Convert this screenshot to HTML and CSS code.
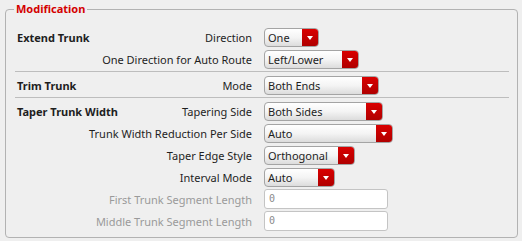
FILE: index.html
```html
<!DOCTYPE html>
<html lang="en">

<head>
    <meta charset="UTF-8">
    <title>Modification</title>
    <link rel="stylesheet" href="styles.css">
</head>

<body>
    <fieldset class="group">
        <legend class="group-title">Modification</legend>

        <!-- Extend Trunk -->
        <div class="row">
            <div class="names"><b class="section">Extend Trunk</b><span class="label">Direction</span></div>
            <div class="combo w54"><span class="value">One</span><span class="drop"></span></div>
        </div>
        <div class="row">
            <div class="names"><span class="label">One Direction for Auto Route</span></div>
            <div class="combo w94"><span class="value">Left/Lower</span><span class="drop"></span></div>
        </div>
        <div class="sep"></div>

        <!-- Trim Trunk -->
        <div class="row">
            <div class="names"><b class="section">Trim Trunk</b><span class="label">Mode</span></div>
            <div class="combo w114"><span class="value">Both Ends</span><span class="drop"></span></div>
        </div>
        <div class="sep"></div>

        <!-- Taper Trunk Width -->
        <div class="row">
            <div class="names"><b class="section">Taper Trunk Width</b><span class="label">Tapering Side</span></div>
            <div class="combo w118"><span class="value">Both Sides</span><span class="drop"></span></div>
        </div>
        <div class="row">
            <div class="names"><span class="label">Trunk Width Reduction Per Side</span></div>
            <div class="combo w128"><span class="value">Auto</span><span class="drop"></span></div>
        </div>
        <div class="row">
            <div class="names"><span class="label">Taper Edge Style</span></div>
            <div class="combo w90"><span class="value">Orthogonal</span><span class="drop"></span></div>
        </div>
        <div class="row">
            <div class="names"><span class="label">Interval Mode</span></div>
            <div class="combo w70"><span class="value">Auto</span><span class="drop"></span></div>
        </div>
        <div class="row">
            <div class="names"><span class="label disabled">First Trunk Segment Length</span></div>
            <div class="field">0</div>
        </div>
        <div class="row">
            <div class="names"><span class="label disabled">Middle Trunk Segment Length</span></div>
            <div class="field">0</div>
        </div>
    </fieldset>
</body>

</html>
```

FILE: styles.css
```css
* {
    margin: 0;
    padding: 0;
    box-sizing: border-box;
}

body {
    background-color: #efefef;
    font-family: "Noto Sans", "DejaVu Sans", sans-serif;
    font-size: 11px;
    color: #1e1e1e;
}

.group {
    margin: 2px 4px 2px 5px;
    border: 1px solid #b2b2b2;
    border-radius: 4px;
    padding: 10px 8px 5px 11px;
    min-width: 0;
}

.group-title {
    margin-left: -3px;
    padding: 0 2px;
    line-height: 14px;
    font-weight: bold;
    color: #d40000;
}

.row {
    display: grid;
    grid-template-columns: 235px auto;
    column-gap: 12px;
    align-items: center;
    height: 22px;
}

.names {
    display: flex;
    justify-content: space-between;
    white-space: nowrap;
}

.names .label:only-child {
    margin-left: auto;
}

.section {
    font-weight: bold;
}

.label.disabled {
    color: #9a9a9a;
}

.sep {
    height: 1px;
    margin: 1px 0 2px -2px;
    background-color: #bdbdbd;
}

/* drop-down box */
.combo {
    display: flex;
    height: 19px;
    border: 1px solid #a4a4a4;
    border-radius: 4px;
    background: linear-gradient(#ffffff, #f4f4f4 50%, #dcdcdc);
    overflow: hidden;
}

.combo .value {
    flex: 1;
    padding-left: 3px;
    line-height: 17px;
}

.combo .drop {
    width: 16px;
    background: linear-gradient(#d90000, #b00000);
    position: relative;
}

.combo .drop::after {
    content: "";
    position: absolute;
    left: 5px;
    top: 7px;
    border-left: 3px solid transparent;
    border-right: 3px solid transparent;
    border-top: 4px solid #fff;
}

.w54 { width: 55px; }
.w94 { width: 95px; }
.w114 { width: 115px; }
.w118 { width: 119px; }
.w128 { width: 129px; }
.w90 { width: 91px; }
.w70 { width: 71px; }

.field {
    width: 124px;
    height: 20px;
    border: 1px solid #c4c4c4;
    border-radius: 3px;
    background-color: #fff;
    padding-left: 4px;
    line-height: 18px;
    font-family: "DejaVu Sans Mono", monospace;
    font-size: 10px;
    color: #8a8a8a;
}
```
